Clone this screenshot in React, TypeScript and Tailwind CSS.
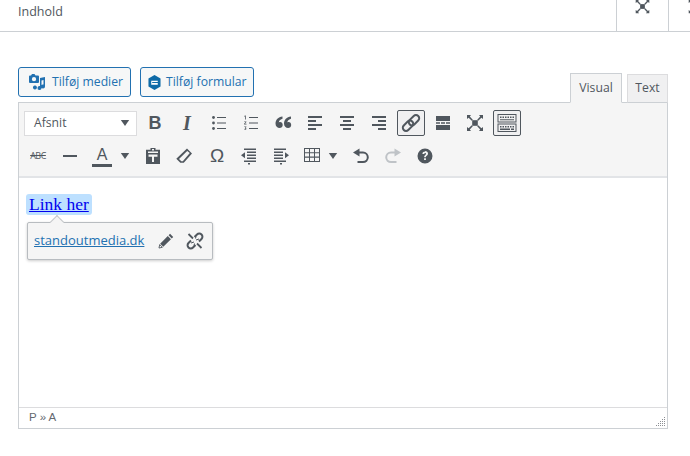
import React from "react";

const C = "#50575e";
const Svg = ({ children, s = 20, className = "" }: { children: React.ReactNode; s?: number; className?: string }) => (
  <svg width={s} height={s} viewBox="0 0 20 20" className={className} fill={C}>{children}</svg>
);

const Fs = () => (
  <>
    <rect x="7.200" y="7.200" width="5.600" height="5.600" />
    <path d="M2 2h4L4.800 3.600 7.800 6.800 6.800 7.800 3.600 4.800 2 6zM18 2v4l-1.600-1.200-3.200 3-1-1 3-3.200L14 2zM2 18v-4l1.600 1.200 3.200-3 1 1-3 3.200L6 18zM18 18h-4l1.200-1.600-3-3.200 1-1 3.200 3L18 14z" />
  </>
);

const outdentPath = "M5 2.500h12V4H5zM8 5.500h9V7H8zM8 8.500h9V10H8zM8 11.500h9V13H8zM5 14.500h12V16H5zM9 17h2v1.500H9zM2 9.300l4-3v6z";

const icons: Record<string, React.ReactNode> = {
  ul: (
    <>
      <circle cx="4.500" cy="4.500" r="1.400" /><circle cx="4.500" cy="10" r="1.400" /><circle cx="4.500" cy="15.500" r="1.400" />
      <path d="M8 4h9v1H8zM8 9.500h9v1H8zM8 15h9v1H8z" />
    </>
  ),
  ol: (
    <>
      <path d="M8 4h9v1H8zM8 9.500h9v1H8zM8 15h9v1H8z" />
      <path d="M4 2.500h.8v4H4V3.400l-.7.300v-.6zM3.200 8.400h2.200v.6L4 10.700h1.500v.7H3.100v-.6l1.400-1.700H3.200zM3.200 13.500h2.200v.6l-.8.800c.5.100.8.400.8.900 0 .7-.5 1.100-1.200 1.100-.4 0-.8-.1-1-.3l.2-.6c.2.200.5.300.8.300s.5-.1.500-.4-.3-.5-.9-.5v-.5l.8-.8H3.200z" />
    </>
  ),
  quote: (
    <path d="M9.500 3.500v2.200c-2.500.7-3.500 2-3.700 3.700.4-.2.800-.3 1.300-.3 1.500 0 2.600 1.200 2.600 2.800 0 1.800-1.400 3.100-3.100 3.100C4.400 15 2.500 13.300 2.500 10.500c0-3.800 2.700-6.400 7-7zM18 3.500v2.200c-2.500.7-3.500 2-3.700 3.700.4-.2.800-.3 1.300-.3 1.500 0 2.600 1.200 2.600 2.800 0 1.800-1.400 3.100-3.100 3.100-2.200 0-4.100-1.700-4.100-4.500 0-3.800 2.700-6.400 7-7z" />
  ),
  left: <path d="M3 4h14v2H3zM3 8h8v2H3zM3 12h14v2H3zM3 16h8v2H3z" transform="translate(0 -1)" />,
  center: <path d="M3 4h14v2H3zM6 8h8v2H6zM3 12h14v2H3zM6 16h8v2H6z" transform="translate(0 -1)" />,
  right: <path d="M3 4h14v2H3zM9 8h8v2H9zM3 12h14v2H3zM9 16h8v2H9z" transform="translate(0 -1)" />,
  link: (
    <g fill="none" stroke={C} strokeWidth="2">
      <rect x="7" y="4" width="12" height="6.400" rx="3.200" transform="rotate(-45 13 7.200)" />
      <rect x="1" y="9.600" width="12" height="6.400" rx="3.200" transform="rotate(-45 7 12.800)" />
    </g>
  ),
  more: <path d="M3 3h14v5H3zM3 9.200h4v1.600H3zM8 9.200h4v1.600H8zM13 9.200h4v1.600h-4zM3 12h14v5H3z" />,
  kitchen: (
    <>
      <path fillRule="evenodd" d="M.5 1h19v8.500H.5zM1.500 2v6.500h17V2zM.5 10.500h19V19H.5zM1.500 11.500V18h17v-6.500z" />
      <path d="M3 3.500h1.500V5H3zM5.500 3.500H7V5H5.500zM8 3.500h1.500V5H8zM10.500 3.500H12V5h-1.500zM13 3.500h1.500V5H13zM15.500 3.500H17V5h-1.500zM3 6.200h14v1H3z" />
      <path d="M3 13h1.500v1.500H3zM5.500 13H7v1.500H5.500zM8 13h1.500v1.500H8zM10.500 13H12v1.500h-1.500zM13 13h1.500v1.500H13zM15.500 13H17v1.500h-1.500zM3 15.500h10V17H3zM14 15.500h3V17h-3z" />
    </>
  ),
  dash: <rect x="3" y="9" width="14" height="2" />,
  paste: (
    <path fillRule="evenodd" d="M7.500 2h5v1.800H17V18H3V3.800h4.500zM9 3v1.500h2V3zM5.500 8.500v2.300H9V16h2v-5.200h3.500V8.500zM5 5.500h10V7H5z" />
  ),
  eraser: (
    <path fillRule="evenodd" d="M13 2.500 18 7.500 9.800 16.800 6.300 16.800 2.300 12.800zM13.200 5 5 13l2.300 2.300 1.500 0 7-8.300z" />
  ),
  outdent: <path d={outdentPath} />,
  indent: <path d={outdentPath} transform="translate(20 0) scale(-1 1)" />,
  table: (
    <path fillRule="evenodd" d="M2 2h16v14H2zM3 3v3.300h4V3zM8 3v3.300h4V3zM13 3v3.300h4V3zM3 7.300v3.300h4V7.300zM8 7.300v3.300h4V7.300zM13 7.300v3.300h4V7.300zM3 11.700V15h4v-3.300zM8 11.700V15h4v-3.300zM13 11.700V15h4v-3.300z" />
  ),
  undo: (
    <g>
      <path d="M8.500 2.500v8L2 6.500z" />
      <path fill="none" stroke={C} strokeWidth="2" d="M7 6.500h5a4.800 4.800 0 0 1 0 9.600H6.500" />
    </g>
  ),
  redo: (
    <g fill="#bfc3c7">
      <path d="M11.500 2.500v8L18 6.500z" />
      <path fill="none" stroke="#bfc3c7" strokeWidth="2" d="M13 6.500H8a4.800 4.800 0 0 0 0 9.600h5.500" />
    </g>
  ),
  help: (
    <path fillRule="evenodd" d="M10 2.500a7.500 7.500 0 1 1 0 15 7.500 7.500 0 0 1 0-15zM10.900 12.300H9.100V14h1.800zM10.200 5.500c-1.500 0-2.700.7-2.800 2.400l1.800.1c.1-.7.400-1 1-1 .5 0 .9.300.9.800 0 .4-.3.700-.8 1.100-.8.600-1.200 1.100-1.100 2.400h1.700c0-.8.200-1.100.9-1.600.7-.6 1.200-1.100 1.200-2.100 0-1.600-1.300-2.500-2.800-2.500z" />
  ),
};

const Btn = ({ name, cls = "w-7", boxed }: { name?: string; cls?: string; boxed?: boolean }) => (
  <div className={`h-[26px] flex items-center justify-center shrink-0 rounded-[2px] ${cls} ${boxed ? "border border-[#50575e] bg-[#f0f0f1]" : ""}`}>
    {name && <Svg>{icons[name]}</Svg>}
  </div>
);

const Letter = ({ t, cls }: { t: string; cls: string }) => (
  <div className={`w-7 mr-1 h-[26px] shrink-0 flex items-center justify-center text-[#50575e] ${cls}`}>{t}</div>
);

const Caret = ({ cls }: { cls: string }) => (
  <div className={`h-[26px] shrink-0 flex items-center justify-center ${cls}`}>
    <svg width="10" height="10" viewBox="0 0 12 12" fill={C}><path d="M1 2.500h10L6 9.500z" /></svg>
  </div>
);

export default function App() {
  return (
    <div className="w-[690px] h-[456px] bg-white overflow-hidden font-['Open_Sans','Noto_Sans',sans-serif]">
      <div className="h-8 border-b border-[#ccd0d4] flex items-start justify-between pl-[18px]">
        <div className="text-[12.500px] font-medium leading-[23px] text-[#50575e]">Indhold</div>
        <div className="flex h-[31px]">
          <div className="w-[52px] border-l border-[#ccd0d4] flex justify-center overflow-hidden">
            <Svg s={17} className="-mt-[2px]"><Fs /></Svg>
          </div>
          <div className="w-[22px] border-l border-[#ccd0d4] overflow-hidden pl-[18px]">
            <Svg s={17} className="-mt-[2px]"><Fs /></Svg>
          </div>
        </div>
      </div>

      <div className="mt-[35px] mx-[18px] w-[650px] relative">
        <div className="flex justify-between items-end h-[35px]">
          <div className="flex gap-[9px] self-start">
            <button className="w-[113px] h-[30px] rounded-[3px] border border-[#2271b1] bg-[#f6f7f7] text-[#2271b1] text-[12.200px] flex items-center pl-[8px] gap-[5px]">
              <svg width="20" height="20" viewBox="0 0 20 20" fill="#2271b1">
                <path fillRule="evenodd" d="M5 2h2.500l1 1.500H11a1 1 0 0 1 1 1V10a1 1 0 0 1-1 1H3a1 1 0 0 1-1-1V4.500a1 1 0 0 1 1-1h1zM7 5a2 2 0 1 0 0 4.300A2 2 0 0 0 7 5z" />
                <path d="M13 6l5-1v9.500a2 2 0 1 1-1.500-1.900V8l-2 .4V16a2 2 0 1 1-1.500-1.900zM8 13.500a2 2 0 1 1-.1 0z" />
              </svg>
              Tilføj medier
            </button>
            <button className="w-[114px] h-[30px] rounded-[3px] border border-[#2271b1] bg-[#f6f7f7] text-[#2271b1] text-[12.200px] flex items-center pl-[7px] gap-[5px]">
              <svg width="13" height="15" viewBox="0 0 14 16">
                <path fill="#0e6ba8" d="M7 0l6.500 3.700v8.600L7 16 .5 12.300V3.700z" />
                <path fill="#fff" d="M3.500 6h7v1.500h-6v1h6v2h-7z" />
              </svg>
              Tilføj formular
            </button>
          </div>
          <div className="flex items-end gap-[5px] relative z-10 -mb-px">
            <div className="w-[52px] h-[30px] border border-[#ccd0d4] border-b-[#f5f5f5] bg-[#f5f5f5] text-[#50575e] text-[12.200px] flex items-center justify-center">Visual</div>
            <div className="w-[41px] h-[29px] border border-[#dcdcde] border-b-[#ccd0d4] bg-[#f0f0f1] text-[#50575e] text-[12.200px] flex items-center justify-center">Text</div>
          </div>
        </div>

        <div className="h-[327px] border border-[#ccd0d4] flex flex-col">
          <div className="h-[75px] bg-[#f5f5f5] border-b-2 border-[#e2e4e7] pl-[5px] pt-[7px] shrink-0">
            <div className="flex items-center">
              <div className="w-[113px] h-[25px] bg-white border border-[#dcdcde] flex items-center justify-between pl-[9px] pr-[6px] text-[12.200px] text-[#50575e] mr-1">
                Afsnit
                <svg width="10" height="10" viewBox="0 0 12 12" fill={C}><path d="M1 2.500h10L6 9.500z" /></svg>
              </div>
              <div className="w-7 mr-1 h-[26px] shrink-0 flex items-center justify-center text-[#50575e] text-[18px] font-bold font-['Liberation_Sans',sans-serif]">B</div>
              <div className="w-7 mr-[4px] h-[26px] shrink-0 flex items-center justify-center text-[#50575e] text-[20px] font-bold italic font-['Liberation_Serif',serif]">I</div>
              <Btn name="ul" cls="w-7 mr-1" />
              <Btn name="ol" cls="w-7 mr-1" />
              <Btn name="quote" cls="w-7 mr-1" />
              <Btn name="left" cls="w-7 mr-1" />
              <Btn name="center" cls="w-7 mr-1" />
              <Btn name="right" cls="w-7 mr-1" />
              <Btn name="link" cls="w-7 mr-1" boxed />
              <Btn name="more" cls="w-7 mr-1" />
              <div className="w-7 mr-1 h-[26px] shrink-0 flex items-center justify-center"><Svg><Fs /></Svg></div>
              <Btn name="kitchen" cls="w-7" boxed />
            </div>
            <div className="flex items-center mt-[7px]">
              <Letter t="ABC" cls="text-[9px] line-through tracking-[-0.5px]" />
              <Btn name="dash" cls="w-7 mr-1" />
              <div className="w-7 h-[26px] shrink-0 flex flex-col items-center justify-center text-[#50575e]">
                <span className="text-[16px] leading-[18px] font-['Liberation_Sans',sans-serif]">A</span>
                <span className="w-5 h-[3px] bg-[#50575e]" />
              </div>
              <Caret cls="w-[14px] ml-[2px] mr-[7px]" />
              <Btn name="paste" cls="w-7 mr-[3px]" />
              <Btn name="eraser" cls="w-7 mr-[5px]" />
              <Letter t="Ω" cls="text-[19px] font-['Liberation_Sans',sans-serif]" />
              <Btn name="outdent" cls="w-7 mr-1" />
              <Btn name="indent" cls="w-7 mr-[3px]" />
              <Btn name="table" cls="w-7" />
              <Caret cls="w-[14px] mr-[7px]" />
              <Btn name="undo" cls="w-7 mr-1" />
              <Btn name="redo" cls="w-7 mr-1" />
              <Btn name="help" cls="w-7" />
            </div>
          </div>

          <div className="flex-1 relative pl-[7px] pt-[14px]">
            <span className="inline-block bg-[#bde0ff] rounded-[3px] px-[3px] h-[21px] leading-[21px] text-[17.500px] text-[#0000ee] underline font-['Liberation_Serif',serif]">Link her</span>
            <div className="absolute left-[8px] top-[44px] w-[186px] h-[38px] bg-[#f5f5f5] border border-[#b8bcc0] rounded-[2px] shadow-[0_1px_3px_rgba(0,0,0,0.2)] flex items-center pl-[6px]">
              <div className="absolute -top-[6px] left-[24px] w-[10px] h-[10px] rotate-45 bg-[#f5f5f5] border-l border-t border-[#c4c7ca]" />
              <span className="text-[#2271b1] underline text-[13px] w-[123px] shrink-0">standoutmedia.dk</span>
              <svg width="18" height="18" viewBox="0 0 20 20" fill={C} className="shrink-0">
                <path d="M14.500 2l3.500 3.500-1.600 1.600-3.500-3.500zM12 4.500 15.500 8 7 16.500 3.500 13z" />
                <path fill="none" stroke={C} d="M3 14l3 3-3.800 .8z" />
              </svg>
              <svg width="20" height="20" viewBox="0 0 20 20" fill="none" stroke={C} strokeWidth="2" className="ml-[10px] shrink-0">
                <path d="M9.500 6 12 3.500a3.100 3.100 0 0 1 4.500 4.500L14 10.500" />
                <path d="M10.500 14 8 16.500A3.100 3.100 0 0 1 3.500 12L6 9.500" />
                <path d="M3.500 3 8 7.500M12 12.500l4.500 4.500" strokeWidth="1.800" />
                <path d="M11 9l3-1M9 11l-3 1M10.500 7.500l.5-2M9.500 12.500l-.5 2" strokeWidth="1" />
              </svg>
            </div>
          </div>

          <div className="h-[21px] border-t border-[#dcdcde] flex items-center justify-between pl-[10px] pr-px text-[11.500px] text-[#646970] shrink-0 font-['Liberation_Sans',sans-serif]">
            <span>P » A</span>
            <svg width="10" height="10" viewBox="0 0 10 10" fill="#8c8f94" className="self-end mb-[1px]">
              <path d="M8 0h1v1H8zM8 2h1v1H8zM6 2h1v1H6zM8 4h1v1H8zM6 4h1v1H6zM4 4h1v1H4zM8 6h1v1H8zM6 6h1v1H6zM4 6h1v1H4zM2 6h1v1H2zM8 8h1v1H8zM6 8h1v1H6zM4 8h1v1H4zM2 8h1v1H2zM0 8h1v1H0z" />
            </svg>
          </div>
        </div>
      </div>
    </div>
  );
}
